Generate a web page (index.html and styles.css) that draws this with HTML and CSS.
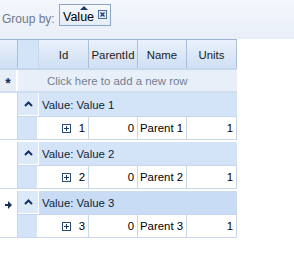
FILE: index.html
```html
<!DOCTYPE html>
<html>
<head>
<meta charset="utf-8">
<link rel="stylesheet" href="styles.css">
</head>
<body>
<div class="panel">
  <span class="gb-label">Group by:</span>
  <div class="chip">
    <span class="chip-arrow"></span>
    <span class="chip-text">Value</span>
    <span class="chip-x"><svg width="9" height="9" viewBox="0 0 9 9"><rect x="0.5" y="0.5" width="8" height="8" fill="#e6eefa" stroke="#4f6f9f"/><path d="M2.5 2.5 L6.5 6.5 M6.5 2.5 L2.5 6.5" stroke="#1b3a6b" stroke-width="1.4"/></svg></span>
  </div>
</div>
<div class="grid">
  <div class="row header">
    <div class="rh hdr-rh"></div>
    <div class="indent hdr-indent"></div>
    <div class="hc c-id">Id</div>
    <div class="hc c-pid">ParentId</div>
    <div class="hc c-name">Name</div>
    <div class="hc c-units">Units</div>
  </div>
  <div class="row addrow">
    <div class="rh"><span class="star">*</span></div>
    <div class="addtext">Click here to add a new row</div>
  </div>

  <div class="block">
    <div class="rh block-rh"></div>
    <div class="block-body">
      <div class="grow">
        <div class="gbtn"><svg width="9" height="6" viewBox="0 0 9 6"><path d="M1 5 L4.5 1.5 L8 5" fill="none" stroke="#15305e" stroke-width="2"/></svg></div>
        <div class="gtext">Value: Value 1</div>
      </div>
      <div class="drow">
        <div class="indent"></div>
        <div class="dc c-id"><span class="plus"></span>1</div>
        <div class="dc c-pid">0</div>
        <div class="dc c-name left">Parent 1</div>
        <div class="dc c-units">1</div>
      </div>
    </div>
  </div>

  <div class="block">
    <div class="rh block-rh"></div>
    <div class="block-body">
      <div class="grow">
        <div class="gbtn"><svg width="9" height="6" viewBox="0 0 9 6"><path d="M1 5 L4.5 1.5 L8 5" fill="none" stroke="#15305e" stroke-width="2"/></svg></div>
        <div class="gtext">Value: Value 2</div>
      </div>
      <div class="drow">
        <div class="indent"></div>
        <div class="dc c-id"><span class="plus"></span>2</div>
        <div class="dc c-pid">0</div>
        <div class="dc c-name left">Parent 2</div>
        <div class="dc c-units">1</div>
      </div>
    </div>
  </div>

  <div class="block last">
    <div class="rh block-rh"><span class="cur"><svg width="7" height="8" viewBox="0 0 7 8"><path d="M0 3 H3 V0 L7 4 L3 8 V5 H0 Z" fill="#15305e"/></svg></span></div>
    <div class="block-body">
      <div class="grow current">
        <div class="gbtn"><svg width="9" height="6" viewBox="0 0 9 6"><path d="M1 5 L4.5 1.5 L8 5" fill="none" stroke="#15305e" stroke-width="2"/></svg></div>
        <div class="gtext">Value: Value 3</div>
      </div>
      <div class="drow">
        <div class="indent"></div>
        <div class="dc c-id"><span class="plus"></span>3</div>
        <div class="dc c-pid">0</div>
        <div class="dc c-name left">Parent 3</div>
        <div class="dc c-units">1</div>
      </div>
    </div>
  </div>
</div>
</body>
</html>
```
FILE: styles.css
```css
* { box-sizing: border-box; }
html, body { margin: 0; padding: 0; background: #fff; }
body {
  font-family: "Liberation Sans", "DejaVu Sans", sans-serif;
  font-size: 11.4px;
  color: #000;
  width: 294px;
  height: 266px;
  overflow: hidden;
  white-space: nowrap;
}
.panel {
  height: 39px;
  background: linear-gradient(#f4f7fc, #e8eef8);
  display: flex;
  align-items: flex-start;
  padding: 4px 0 0 2px;
}
.gb-label {
  color: #6d7a8d;
  font-size: 12px;
  margin-top: 8px;
  width: 57px;
}
.chip {
  position: relative;
  width: 52px;
  height: 22px;
  border: 1px solid #8aa6c9;
  background: linear-gradient(#f7f9fd, #e4ecf7);
  display: flex;
  align-items: center;
  padding: 0 0 0 3px;
}
.chip-arrow {
  position: absolute;
  left: 20px;
  top: 1px;
  width: 0; height: 0;
  border-left: 4px solid transparent;
  border-right: 4px solid transparent;
  border-bottom: 4px solid #1b3a6b;
}
.chip-text {
  font-size: 12.5px;
  color: #000;
  margin-top: 3px;
}
.chip-x { display: flex; margin-left: 4px; margin-top: -1px; }

.grid {
  width: 237px;
  border-top: 1px solid #9db4d2;
}
.row { display: flex; }
.rh {
  width: 18px;
  flex: none;
  border-right: 1px solid #c9d7ea;
  display: flex;
  align-items: center;
  justify-content: center;
}
.header { height: 30px; border-bottom: 2px solid #c6d6ec; }
.hdr-rh { background: linear-gradient(#eaf1fb, #cfdff4); border-right: 1px solid #a9bfdc; }
.hdr-indent { background: #d4e4f8; border-right: 1px solid #a9bfdc; }
.indent { width: 21px; flex: none; border-right: 1px solid #c9d7ea; }
.hc {
  background: linear-gradient(#eaf1fb, #cfdff4);
  border-right: 1px solid #a9bfdc;
  display: flex;
  align-items: center;
  justify-content: center;
  color: #1a1a1a;
  padding-top: 1px;
}
.c-id { width: 50px; }
.c-pid { width: 49px; }
.c-name { width: 49px; }
.c-units { width: 50px; }

.addrow { height: 23px; border-bottom: 2px solid #d0def2; }
.addrow .rh { background: #e8eef8; border-right: 2px solid #fff; }
.star { font-size: 14px; font-weight: bold; color: #15305e; margin-top: 4px; }
.addtext {
  flex: 1;
  background: #e8eff9;
  color: #6e7f95;
  padding-left: 29px;
  display: flex;
  align-items: center;
}

.block { display: flex; border-bottom: 1px solid #c9d7ea; }
.block + .block { margin-top: 2px; }
.block-rh { align-items: flex-start; padding-top: 10px; }
.cur { display: flex; }
.block-body { flex: 1; display: flex; flex-direction: column; }
.grow {
  height: 24px;
  display: flex;
  background: #d3e4f8;
  border-bottom: 1px solid #c6d6ec;
}
.grow.current { background: #c9dcf6; }
.gbtn {
  width: 21px;
  flex: none;
  background: #dce9f9;
  border-right: 1px solid #fff;
  border-bottom: 1px solid #fff;
  display: flex;
  align-items: center;
  justify-content: center;
}
.gtext {
  color: #0f1f3a;
  padding-left: 3px;
  display: flex;
  align-items: center;
}
.drow { display: flex; height: 22px; }
.drow .indent { background: #d4e4f8; border-right: 2px solid #fff; }
.dc {
  border-right: 1px solid #c9d7ea;
  display: flex;
  align-items: center;
  justify-content: flex-end;
  padding-right: 3px;
}
.dc.left { justify-content: flex-start; padding-left: 2px; }
.plus {
  width: 9px;
  height: 9px;
  border: 1px solid #2c4c7c;
  margin-right: 8px;
  position: relative;
  background: #fff;
}
.plus::before, .plus::after {
  content: "";
  position: absolute;
  background: #1b3a6b;
}
.plus::before { left: 1px; right: 1px; top: 3px; height: 1px; }
.plus::after { top: 1px; bottom: 1px; left: 3px; width: 1px; }
```
